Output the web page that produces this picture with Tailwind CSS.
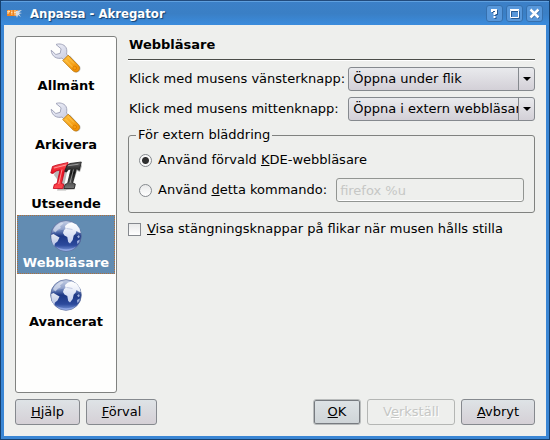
<!DOCTYPE html>
<html lang="sv">
<head>
<meta charset="utf-8">
<meta name="viewport" content="width=device-width, initial-scale=1">
<title>Anpassa - Akregator</title>
<script src="https://cdn.jsdelivr.net/npm/@tailwindcss/browser@4"></script>
</head>
<body class="flex min-h-screen bg-[#15406f] font-['DejaVu_Sans','Noto_Sans',sans-serif] text-[13px] leading-4 text-black">
<svg class="absolute size-0" aria-hidden="true">
  <defs>
    <linearGradient id="gold" x1="0" y1="0" x2="1" y2="1"><stop offset="0" stop-color="#ffc23c"/><stop offset="1" stop-color="#f08a00"/></linearGradient>
    <linearGradient id="steel" x1="0" y1="0" x2="1" y2="1"><stop offset="0" stop-color="#f4f5fb"/><stop offset="1" stop-color="#c4c8de"/></linearGradient>
    <linearGradient id="red" x1="0" y1="0" x2="0" y2="1"><stop offset="0" stop-color="#ff5a5a"/><stop offset=".4" stop-color="#e81020"/><stop offset="1" stop-color="#ff4a50"/></linearGradient>
    <linearGradient id="coal" x1="0" y1="0" x2="0" y2="1"><stop offset="0" stop-color="#666"/><stop offset=".4" stop-color="#111"/><stop offset="1" stop-color="#777"/></linearGradient>
    <linearGradient id="sea" x1="0" y1="0" x2="0" y2="1"><stop offset="0" stop-color="#b4c1dd"/><stop offset=".35" stop-color="#6179b4"/><stop offset=".5" stop-color="#1c3785"/><stop offset=".8" stop-color="#2c4a9c"/><stop offset="1" stop-color="#7f9cdd"/></linearGradient>
    <linearGradient id="land" x1="0" y1="0" x2="0" y2="1"><stop offset="0" stop-color="#fff"/><stop offset="1" stop-color="#c3cfee"/></linearGradient>
    <symbol id="wrench" viewBox="0 0 32 32">
      <path d="M15 18l5-5.500 10 11c2 3-1.500 7.500-5 5.500z" fill="#777" opacity=".4"/>
      <path d="M6 1.500C9 .3 14 1 16 4.500c1.300 2.600.7 5 .5 6.500l2.300 2.500-4.300 4.200-2.500-2.700C7 16.500 1.500 13.500 1.200 7.200l4.600 4.300 4.400-1.200.9-4.500z" fill="url(#steel)" stroke="#9c9fb6" stroke-width=".9"/>
      <path d="M12.800 17.600l5.400-5.400 10.500 10.700c2.600 3-1.200 8-5.300 5.300z" fill="url(#gold)" stroke="#c07c10" stroke-width=".9"/>
      <path d="M15.500 17l8.500 8.500M18 14.500l6 6" stroke="#ffd870" opacity=".6"/>
      <circle cx="24.700" cy="25" r="1.900" fill="#f39b10" stroke="#d87a00" stroke-width=".8"/>
    </symbol>
    <symbol id="fonts" viewBox="0 0 32 32">
      <path d="M4 14l2-7 12-2-1 6-3 15 3 1-1 2.500H7l1-3 3-3z" fill="#555" opacity=".4"/>
      <path d="M.8 12l1.700-6.500L7 4l11-2.500-1 7.500-2-1.200-3.500 14.700 2.300.7-1 4.300H3.300l1-4 2.700-1L10 9 6 10l-3 2.500z" fill="url(#red)" stroke="#c00018" stroke-width=".8"/>
      <path d="M16 29l7-19 8-7 1 2-2 6-3-1-4 13 2.500 1.500-1 4z" fill="#555" opacity=".4"/>
      <path d="M14.800 10.500l2-6L20 2.500 31.300 1l-2 8.500-2.800-2L22.500 22l2.800 1-1 4.500H13.800l1.200-4 2.700-1.300L21 8l-2.500.5-2 2.500z" fill="url(#coal)" stroke="#1a1a1a" stroke-width=".8"/>
      <path d="M18 4.700l10.500-1.500M23.500 8.500l-3.500 13.500" stroke="#ccc" fill="none" opacity=".6"/>
      <path d="M4 7l12-3M12 8.500L8.700 23" stroke="#ffc0c0" fill="none" opacity=".7"/>
    </symbol>
    <symbol id="globe" viewBox="0 0 32 32">
      <circle cx="16" cy="16" r="15.300" fill="url(#sea)" stroke="#5c6d9c" stroke-width=".8"/>
      <path d="M1.200 15l2.300-1 2.500 1.500 3.500 2-2 4-2.500 2-.8 2.500C2 23.500 1 19 1.200 15z" fill="url(#land)" opacity=".9"/>
      <path d="M3 10c2-4 5-6.500 9-7.500l1.500 1-3.500 3 1 1.500-3.500 2-2 2.500z" fill="#e7ecf7" opacity=".55"/>
      <path d="M13 13l1-3 1.500-1-.5-3 3-2.500 4-1 4.500 2 3 4 1.300 4.500-2-.5-2.300-1.500-.8 2.500-2 2-1 4.500-2.700 3.500-1.800-1.500-.9-5-2.800-1.500z" fill="url(#land)"/>
      <path d="M16.500 8.500l3.500.5 2.500.5" stroke="#a3b0d4" fill="none" stroke-width=".8"/>
      <path d="M27 21l2.800-1.500-.5 2.500-2 2zM27 16.500l2-1.500.8 2-1.300 1.200z" fill="#9fb0dc"/>
      <path d="M2 13C3 5 10 1 16 1s13 4 14 12c-7-5-20-4-28 0z" fill="#fff" opacity=".22"/>
      <path d="M6 26.500c6 3.500 14 3.500 20 0-4 6-16 6-20 0z" fill="#b8caff" opacity=".45"/>
    </symbol>
  </defs>
</svg>

<div class="mx-px mb-px flex flex-1 flex-col rounded-t-sm border-t border-[#224b7d] bg-[#3a86d4]">
  <header class="flex h-6 items-center gap-[3px] border-t border-[#5fa0e0] bg-linear-to-b from-[#3c80c8] via-[#3a7fc5] to-[#3b8cdd] pr-1.5 pl-1.5">
    <svg class="h-4 w-4" viewBox="0 0 16 16" aria-hidden="true">
      <path d="M0 4h11l-1 6H0z" fill="#ef8420"/>
      <path d="M1 5h1.500v1H1zM1 5v3M4 5h1.500M4 6.500h1.500M4 8h1.500M7 5h2M7 6.500h2M7 8h2" stroke="#ffe0b0" fill="none"/>
      <path d="M9 5l6-1-3 2.500 3 .5-3 1 2 3-3-2-1 3-1-3-2 1.500L9 8z" fill="#d5dce5"/>
    </svg>
    <h1 class="ml-1 flex-1 font-['DejaVu_Sans_Condensed','DejaVu_Sans',sans-serif] text-[13px] font-bold text-white text-shadow-[1px_1px_1px_#14406f]">Anpassa - Akregator</h1>
    <button type="button" aria-label="Hjälp om fönstret" class="grid size-[17px] place-items-center rounded-[3px] border border-[#3670ae] bg-[#5797da]">
      <svg class="size-[15px]" viewBox="0 0 15 15" fill="none" stroke-width="2"><path d="M5 6V4h4v3H7.500v2M6.500 11h2" stroke="#265b94" transform="translate(1 1)"/><path d="M5 6V4h4v3H7.500v2M6.500 11h2" stroke="#fff"/></svg>
    </button>
    <button type="button" aria-label="Maximera" class="grid size-[17px] place-items-center rounded-[3px] border border-[#3670ae] bg-[#5797da]">
      <svg class="size-[15px]" viewBox="0 0 15 15" fill="none"><path d="M4.500 5.500h8v7h-8z" stroke="#265b94"/><path d="M3.500 4.500h8v7h-8zM3 3.500h9" stroke="#fff"/></svg>
    </button>
    <button type="button" aria-label="Stäng" class="grid size-[17px] place-items-center rounded-[3px] border border-[#3670ae] bg-[#5797da]">
      <svg class="size-[15px]" viewBox="0 0 15 15" fill="none" stroke-width="2.500"><path d="M4 4l8 8M12 4l-8 8" stroke="#265b94"/><path d="M3.500 3.500l8 8M11.500 3.500l-8 8" stroke="#fff"/></svg>
    </button>
  </header>

  <form class="mx-[3px] mb-[3px] flex flex-1 flex-col gap-1.5 bg-[#eeefed] p-[11px]">
    <div class="flex flex-1 gap-[11px]">
      <nav class="w-[102px] shrink-0 rounded-[3px] border border-[#808280] bg-[#fefefd] p-px font-bold">
        <a href="#allmant" class="flex h-[59px] flex-col items-center gap-[3px] border border-transparent pt-1"><svg class="size-8 shrink-0"><use href="#wrench"/></svg>Allmänt</a>
        <a href="#arkivera" class="flex h-[59px] flex-col items-center gap-[3px] border border-transparent pt-1"><svg class="size-8 shrink-0"><use href="#wrench"/></svg>Arkivera</a>
        <a href="#utseende" class="flex h-[59px] flex-col items-center gap-[3px] border border-transparent pt-1"><svg class="size-8 shrink-0"><use href="#fonts"/></svg>Utseende</a>
        <a href="#webblasare" aria-current="page" class="flex h-[59px] flex-col items-center gap-[3px] border border-dotted border-[#b0703a] bg-[#628cb2] pt-1 text-white"><svg class="size-8 shrink-0"><use href="#globe"/></svg>Webbläsare</a>
        <a href="#avancerat" class="flex h-[59px] flex-col items-center gap-[3px] border border-transparent pt-1"><svg class="size-8 shrink-0"><use href="#globe"/></svg>Avancerat</a>
      </nav>

      <main class="min-w-0 flex-1">
        <h2 class="mb-[7px] h-6 border-b border-[#4b4c49] pl-px text-[13px] leading-[18px] font-bold shadow-[0_1px_0_#fff]">Webbläsare</h2>
        <div class="grid grid-cols-[auto_1fr] items-center gap-x-[3px] gap-y-1.5 pl-px">
          <label for="left">Klick med musens vänsterknapp:</label>
          <div class="grid rounded-[3px] border border-[#85898e] bg-linear-to-b from-[#e9eaed] to-[#d3d0d7]">
            <select id="left" class="col-start-1 row-start-1 h-[22px] w-full min-w-0 appearance-none pr-4 pl-1"><option>Öppna under flik</option></select>
            <span class="pointer-events-none col-start-1 row-start-1 grid w-4 place-items-center justify-self-end border-l border-[#85898e]"><svg class="h-1 w-2" viewBox="0 0 8 4"><path d="M0 0h8L4 4z"/></svg></span>
          </div>
          <label for="middle">Klick med musens mittenknapp:</label>
          <div class="grid rounded-[3px] border border-[#85898e] bg-linear-to-b from-[#e9eaed] to-[#d3d0d7]">
            <select id="middle" class="col-start-1 row-start-1 h-[22px] w-full min-w-0 appearance-none pr-4 pl-1"><option>Öppna i extern webbläsare</option></select>
            <span class="pointer-events-none col-start-1 row-start-1 grid w-4 place-items-center justify-self-end border-l border-[#85898e]"><svg class="h-1 w-2" viewBox="0 0 8 4"><path d="M0 0h8L4 4z"/></svg></span>
          </div>
        </div>

        <fieldset class="mt-1.5 rounded-[3px] border border-[#808280] px-2.5 pb-2.5">
          <legend class="-ml-[3px] px-0.5">För extern bläddring</legend>
          <div class="mt-px flex h-8 items-center gap-1.5">
            <input id="kde" type="radio" name="browser" checked class="size-[13px] appearance-none rounded-full border border-[#85898e] bg-[radial-gradient(circle,#303030_3px,#f8f8f8_4px)]">
            <label for="kde">Använd förvald <span class="underline">K</span>DE-webbläsare</label>
          </div>
          <div class="mt-0.5 flex items-center gap-1.5">
            <input id="cmd" type="radio" name="browser" class="size-[13px] appearance-none rounded-full border border-[#85898e] bg-linear-to-b from-[#e9eaea] to-white">
            <label for="cmd">Använd <span class="underline">d</span>etta kommando:</label>
            <input type="text" aria-label="Kommando" value="firefox %u" disabled class="ml-[3px] h-6 min-w-0 flex-1 rounded-[3px] border border-[#929592] bg-[#eeefed] px-[3px] text-[#c6c7c5] shadow-[inset_0_-1px_0_#fff]">
          </div>
        </fieldset>

        <div class="mt-2 flex items-center gap-1.5">
          <input id="close" type="checkbox" class="size-[13px] appearance-none border border-[#85898e] bg-linear-to-b from-[#e9eaea] to-white">
          <label for="close"><span class="underline">V</span>isa stängningsknappar på flikar när musen hålls stilla</label>
        </div>
      </main>
    </div>

    <footer class="flex gap-1.5">
      <button type="button" class="h-[26px] w-[65px] rounded-[3px] border border-[#85898e] bg-linear-to-b from-[#dee3e6] to-[#d5d0d6]"><span class="underline">H</span>jälp</button>
      <button type="button" class="h-[26px] w-[71px] rounded-[3px] border border-[#85898e] bg-linear-to-b from-[#dee3e6] to-[#d5d0d6]"><span class="underline">F</span>örval</button>
      <button type="submit" class="ml-auto h-[26px] w-12 rounded-[3px] border border-[#b9bcbc] bg-linear-to-b from-[#dee3e6] to-[#ced4d7] shadow-[inset_0_0_0_1px_#777b80]"><span class="underline">O</span>K</button>
      <button type="button" disabled class="h-[26px] w-[88px] rounded-[3px] border border-[#b4b6b4] text-[#c6c7c5] text-shadow-[1px_1px_0_#fff]">V<span class="underline">e</span>rkställ</button>
      <button type="button" class="h-[26px] w-[74px] rounded-[3px] border border-[#85898e] bg-linear-to-b from-[#dee3e6] to-[#d5d0d6]"><span class="underline">A</span>vbryt</button>
    </footer>
  </form>
</div>
</body>
</html>
